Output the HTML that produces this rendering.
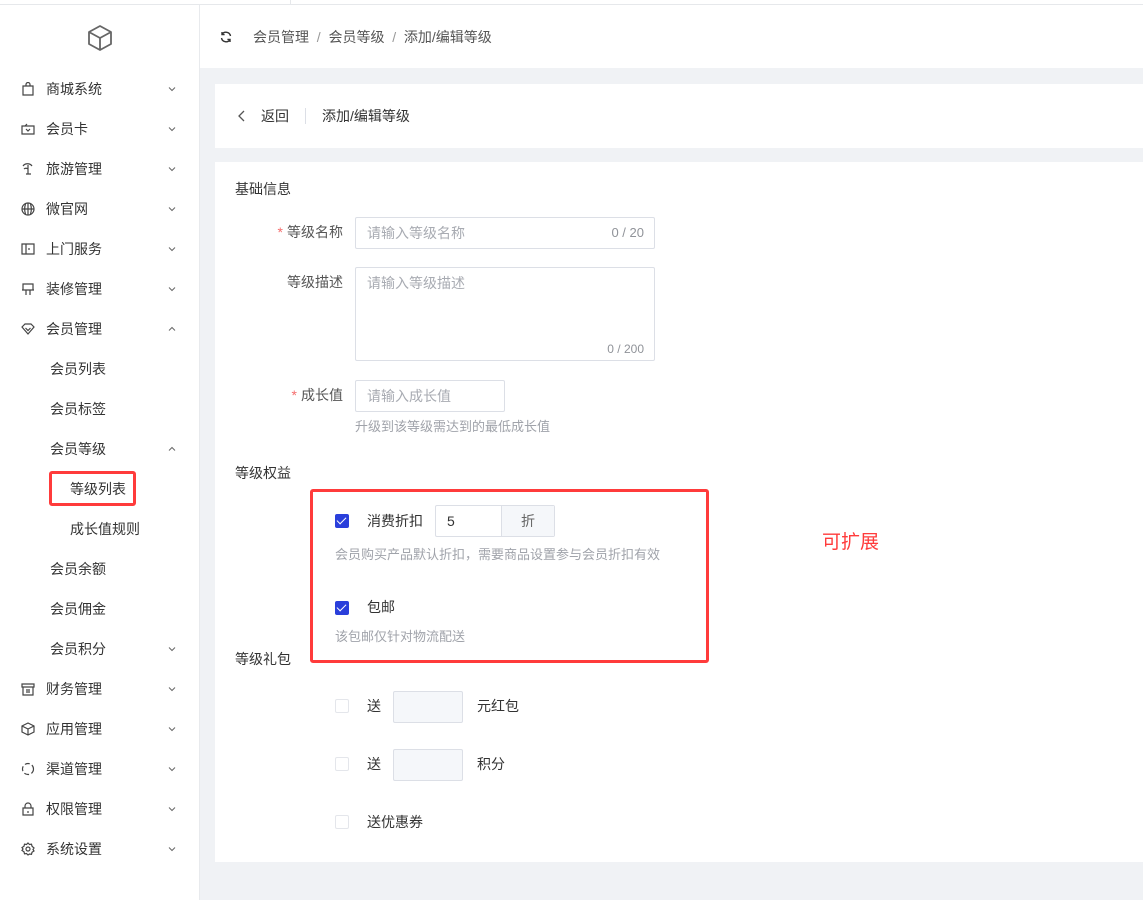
<!DOCTYPE html>
<html><head><meta charset="utf-8"><style>
*{margin:0;padding:0;box-sizing:border-box}
body{width:1143px;height:900px;background:#f0f2f5;font-family:"Liberation Sans","Noto Sans CJK SC",sans-serif;font-size:14px;line-height:20px;color:#333;position:relative;overflow:hidden}
.abs{position:absolute}
.side{left:0;top:5px;width:200px;height:895px;background:#fff;border-right:1px solid #e8eaed}
.topstrip{left:0;top:0;width:1143px;height:5px;background:#fff;border-bottom:1px solid #e6e8eb}
.mi{position:absolute;left:0;width:199px;height:40px;line-height:40px;font-size:14px;color:#333}
.mi .t{position:absolute;left:46px}
.mi .ic{position:absolute;left:21px;top:13px;width:14px;height:14px}
.mi .ch{position:absolute;left:167px;top:15px;width:10px;height:10px}
.hdr{left:200px;top:5px;width:943px;height:63px;background:#fff}
.card{background:#fff;position:absolute;left:215px;width:928px}
.lbl{position:absolute;text-align:right;width:120px;left:223px;color:#555}
.star{color:#f56c6c;margin-right:4px}
.inp{position:absolute;border:1px solid #dcdfe6;background:#fff;border-radius:2px}
.ph{color:#a8abb2;position:absolute}
.tip{position:absolute;color:#a0a3aa;font-size:13px}
.cb{position:absolute;width:14px;height:14px;border-radius:2px}
.cb.on{background:#2a3fdb}
.cb.off{border:1px solid #e4e6eb;background:#fff}
.cb.on:after{content:"";position:absolute;left:4px;top:1px;width:4px;height:8px;border:solid #fff;border-width:0 1.5px 1.5px 0;transform:rotate(45deg)}
</style></head><body>
<div class="abs topstrip"><div class="abs" style="left:290px;top:0;width:1px;height:4px;background:#e6e8eb"></div></div>
<div class="abs side">
<svg class="abs" style="left:86px;top:19px" width="28" height="28" viewBox="0 0 28 28" fill="none" stroke="#666" stroke-width="1.8" stroke-linejoin="round"><path d="M14 2 L25 8 L25 20 L14 26 L3 20 L3 8 Z M3 8 L14 14 L25 8 M14 14 L14 26"/></svg>
</div>
<div class="abs hdr">
<svg class="abs" style="left:20px;top:26px" width="12" height="12" viewBox="0 0 12 12" fill="none" stroke="#333" stroke-width="1.4"><path d="M10.5 5A4.6 4.6 0 0 0 2 3.5M1.5 7A4.6 4.6 0 0 0 10 8.5"/><path d="M2 1v2.6h2.6M10 11V8.4H7.4"/></svg>
<div class="abs" style="left:53px;top:22px;font-size:14px;color:#555;white-space:nowrap">会员管理 &nbsp;<span style="color:#999">/</span>&nbsp; 会员等级 &nbsp;<span style="color:#999">/</span>&nbsp; 添加/编辑等级</div>
</div>
<div class="card" style="top:84px;height:64px">
<svg class="abs" style="left:22px;top:26px" width="8" height="12" viewBox="0 0 8 12" fill="none" stroke="#555" stroke-width="1.3"><path d="M7 1L2 6l5 5"/></svg>
<div class="abs" style="left:46px;top:22px;color:#333">返回</div>
<div class="abs" style="left:90px;top:24px;width:1px;height:16px;background:#dcdfe6"></div>
<div class="abs" style="left:107px;top:22px;color:#333">添加/编辑等级</div>
</div>
<div class="card" style="top:162px;height:700px"></div>
<div class="abs" style="left:235px;top:179px;color:#333">基础信息</div>
<div class="lbl" style="top:222px"><span class="star">*</span>等级名称</div>
<div class="inp" style="left:355px;top:217px;width:300px;height:32px"><span class="ph" style="left:11px;top:5px">请输入等级名称</span><span class="ph" style="right:10px;top:5px;color:#909399;font-size:13px">0 / 20</span></div>
<div class="lbl" style="top:272px">等级描述</div>
<div class="inp" style="left:355px;top:267px;width:300px;height:94px"><span class="ph" style="left:11px;top:5px">请输入等级描述</span><span class="ph" style="right:10px;top:71px;color:#909399;font-size:12px">0 / 200</span></div>
<div class="lbl" style="top:385px"><span class="star">*</span>成长值</div>
<div class="inp" style="left:355px;top:380px;width:150px;height:32px"><span class="ph" style="left:11px;top:5px">请输入成长值</span></div>
<div class="tip" style="left:355px;top:417px">升级到该等级需达到的最低成长值</div>
<div class="abs" style="left:235px;top:463px">等级权益</div>
<div class="cb on" style="left:335px;top:514px"></div>
<div class="abs" style="left:367px;top:511px">消费折扣</div>
<div class="inp" style="left:435px;top:505px;width:120px;height:32px"><span style="position:absolute;left:11px;top:5px">5</span><div class="abs" style="left:65px;top:0;width:53px;height:30px;background:#f5f7fa;border-left:1px solid #dcdfe6;text-align:center;line-height:30px;color:#666">折</div></div>
<div class="tip" style="left:335px;top:545px">会员购买产品默认折扣，需要商品设置参与会员折扣有效</div>
<div class="cb on" style="left:335px;top:601px"></div>
<div class="abs" style="left:367px;top:597px">包邮</div>
<div class="tip" style="left:335px;top:627px">该包邮仅针对物流配送</div>
<div class="abs" style="left:310px;top:489px;width:399px;height:174px;border:3px solid #ff3b3b;border-radius:3px"></div>
<div class="abs" style="left:822px;top:531px;font-size:19px;line-height:24px;color:#ff3b3b">可扩展</div>
<div class="abs" style="left:235px;top:649px">等级礼包</div>
<div class="cb off" style="left:335px;top:699px"></div>
<div class="abs" style="left:367px;top:696px">送</div>
<div class="inp" style="left:393px;top:691px;width:70px;height:32px;background:#f5f7fa"></div>
<div class="abs" style="left:477px;top:696px">元红包</div>
<div class="cb off" style="left:335px;top:757px"></div>
<div class="abs" style="left:367px;top:754px">送</div>
<div class="inp" style="left:393px;top:749px;width:70px;height:32px;background:#f5f7fa"></div>
<div class="abs" style="left:477px;top:754px">积分</div>
<div class="cb off" style="left:335px;top:815px"></div>
<div class="abs" style="left:367px;top:812px">送优惠券</div>

<div class="mi" style="top:69px"><svg class="ic" viewBox="0 0 14 14" fill="none" stroke="#444" stroke-width="1.2"><path d="M2 4h10v9H2zM5 4V2.5A2 2 0 0 1 9 2.5V4"/></svg><span class="t">商城系统</span><svg class="ch" viewBox="0 0 10 10" fill="none" stroke="#666"><path d="M2 3.5l3 3 3-3"/></svg></div>
<div class="mi" style="top:109px"><svg class="ic" viewBox="0 0 14 14" fill="none" stroke="#444" stroke-width="1.2"><path d="M1 4h12v8H1zM5 7l2 2 2-2M4 4l2-2"/></svg><span class="t">会员卡</span><svg class="ch" viewBox="0 0 10 10" fill="none" stroke="#666"><path d="M2 3.5l3 3 3-3"/></svg></div>
<div class="mi" style="top:149px"><svg class="ic" viewBox="0 0 14 14" fill="none" stroke="#444" stroke-width="1.2"><path d="M2 4c2-3 7-3 9 0M7 3v9M5 12h5M3 7c1-1 3-1 4 0"/></svg><span class="t">旅游管理</span><svg class="ch" viewBox="0 0 10 10" fill="none" stroke="#666"><path d="M2 3.5l3 3 3-3"/></svg></div>
<div class="mi" style="top:189px"><svg class="ic" viewBox="0 0 14 14" fill="none" stroke="#444" stroke-width="1.2"><circle cx="7" cy="7" r="6"/><path d="M1 7h12M7 1v12M4.5 2c-1 3-1 7 0 10M9.5 2c1 3 1 7 0 10"/></svg><span class="t">微官网</span><svg class="ch" viewBox="0 0 10 10" fill="none" stroke="#666"><path d="M2 3.5l3 3 3-3"/></svg></div>
<div class="mi" style="top:229px"><svg class="ic" viewBox="0 0 14 14" fill="none" stroke="#444" stroke-width="1.2"><path d="M1 2h12v10H1zM5 2v10M8 6v2"/></svg><span class="t">上门服务</span><svg class="ch" viewBox="0 0 10 10" fill="none" stroke="#666"><path d="M2 3.5l3 3 3-3"/></svg></div>
<div class="mi" style="top:269px"><svg class="ic" viewBox="0 0 14 14" fill="none" stroke="#444" stroke-width="1.2"><path d="M2 2h10v6H2zM1 8h12M5 8v5M9 8v5"/></svg><span class="t">装修管理</span><svg class="ch" viewBox="0 0 10 10" fill="none" stroke="#666"><path d="M2 3.5l3 3 3-3"/></svg></div>
<div class="mi" style="top:309px"><svg class="ic" viewBox="0 0 14 14" fill="none" stroke="#444" stroke-width="1.2"><path d="M1 5l3-3h6l3 3-6 7z M4.5 6l2.5 2.5L9.5 6"/></svg><span class="t">会员管理</span><svg class="ch" viewBox="0 0 10 10" fill="none" stroke="#666"><path d="M2 6.5l3-3 3 3"/></svg></div>
<div class="mi" style="top:349px"><span class="t" style="left:50px">会员列表</span></div>
<div class="mi" style="top:389px"><span class="t" style="left:50px">会员标签</span></div>
<div class="mi" style="top:429px"><span class="t" style="left:50px">会员等级</span><svg class="ch" viewBox="0 0 10 10" fill="none" stroke="#666"><path d="M2 6.5l3-3 3 3"/></svg></div>
<div class="mi" style="top:469px"><span class="t" style="left:70px">等级列表</span></div>
<div class="abs" style="left:49px;top:471px;width:87px;height:35px;border:3px solid #ff3b3b;border-radius:3px"></div>
<div class="mi" style="top:509px"><span class="t" style="left:70px">成长值规则</span></div>
<div class="mi" style="top:549px"><span class="t" style="left:50px">会员余额</span></div>
<div class="mi" style="top:589px"><span class="t" style="left:50px">会员佣金</span></div>
<div class="mi" style="top:629px"><span class="t" style="left:50px">会员积分</span><svg class="ch" viewBox="0 0 10 10" fill="none" stroke="#666"><path d="M2 3.5l3 3 3-3"/></svg></div>
<div class="mi" style="top:669px"><svg class="ic" viewBox="0 0 14 14" fill="none" stroke="#444" stroke-width="1.2"><path d="M1 2h12v3H1zM2 5v8h10V5M5 8h4M5 10h4"/></svg><span class="t">财务管理</span><svg class="ch" viewBox="0 0 10 10" fill="none" stroke="#666"><path d="M2 3.5l3 3 3-3"/></svg></div>
<div class="mi" style="top:709px"><svg class="ic" viewBox="0 0 14 14" fill="none" stroke="#444" stroke-width="1.2"><path d="M7 1l6 3v6l-6 3-6-3V4zM1 4l6 3 6-3M7 7v6"/></svg><span class="t">应用管理</span><svg class="ch" viewBox="0 0 10 10" fill="none" stroke="#666"><path d="M2 3.5l3 3 3-3"/></svg></div>
<div class="mi" style="top:749px"><svg class="ic" viewBox="0 0 14 14" fill="none" stroke="#444" stroke-width="1.2"><circle cx="7" cy="7" r="5.5" stroke-dasharray="5 2.5"/></svg><span class="t">渠道管理</span><svg class="ch" viewBox="0 0 10 10" fill="none" stroke="#666"><path d="M2 3.5l3 3 3-3"/></svg></div>
<div class="mi" style="top:789px"><svg class="ic" viewBox="0 0 14 14" fill="none" stroke="#444" stroke-width="1.2"><path d="M2 6h10v7H2zM4 6V4a3 3 0 0 1 6 0v2M7 9v2"/></svg><span class="t">权限管理</span><svg class="ch" viewBox="0 0 10 10" fill="none" stroke="#666"><path d="M2 3.5l3 3 3-3"/></svg></div>
<div class="mi" style="top:829px"><svg class="ic" viewBox="0 0 14 14" fill="none" stroke="#444" stroke-width="1.2"><circle cx="7" cy="7" r="2"/><path d="M7 1l1.5 1.5 2-.3.5 2L13 6l-1 1.5 1 1.5-2 1.3-.5 2-2-.3L7 13l-1.5-1.5-2 .3-.5-2L1 8.5 2 7 1 5.5l2-1.3.5-2 2 .3z"/></svg><span class="t">系统设置</span><svg class="ch" viewBox="0 0 10 10" fill="none" stroke="#666"><path d="M2 3.5l3 3 3-3"/></svg></div>
</body></html>
